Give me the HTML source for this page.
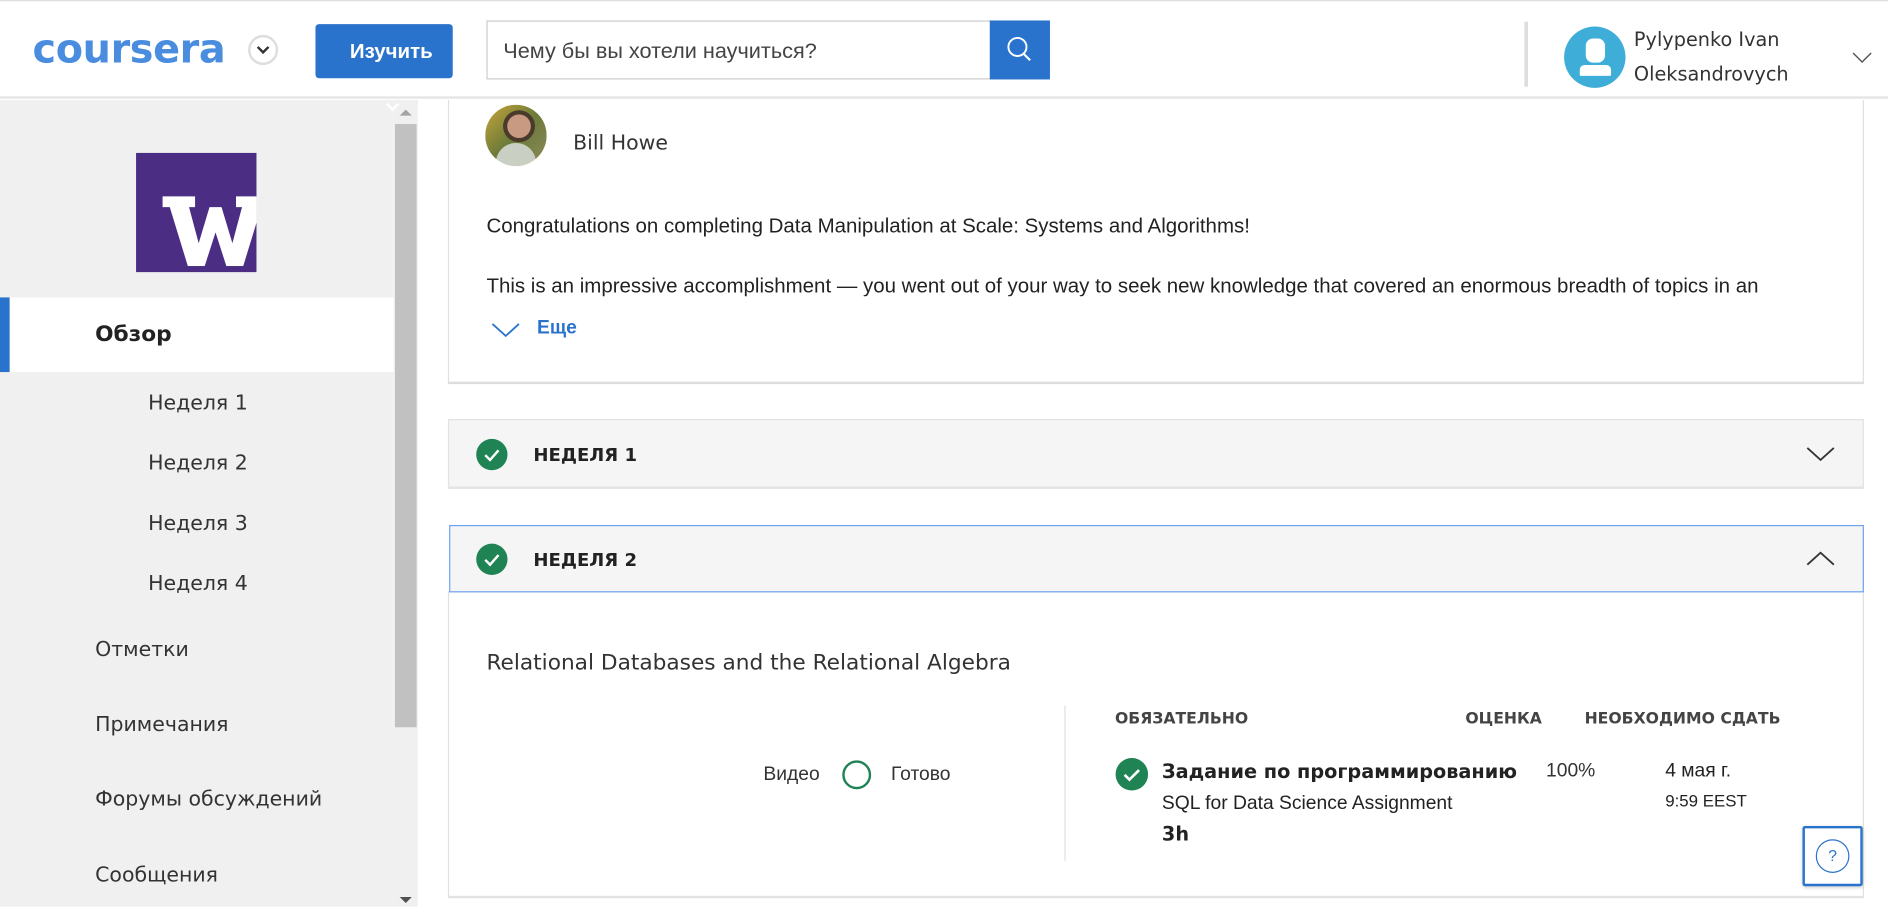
<!DOCTYPE html>
<html><head><meta charset="utf-8"><style>
*{margin:0;padding:0;box-sizing:border-box}
html,body{width:1888px;height:907px;overflow:hidden;background:#fff}
#w{position:absolute;left:0;top:0;width:1568px;height:753px;transform:scale(1.20408);transform-origin:0 0;font-family:"Liberation Sans","DejaVu Sans",sans-serif;color:#333}
.a{position:absolute;white-space:nowrap}
.os{font-family:"DejaVu Sans","Liberation Sans",sans-serif}
</style></head><body><div id="w">
<!-- header -->
<div class="a" style="left:0;top:0;width:1568px;height:82px;background:#fff;border-top:1px solid #ddd;border-bottom:2px solid #e5e5e5"></div>
<div class="a" style="left:27px;top:21px;font-size:33px;font-weight:bold;color:#4a8ddf;letter-spacing:-0.3px;font-family:'DejaVu Sans',sans-serif">coursera</div>
<div class="a" style="left:206px;top:29px;width:25px;height:25px;border:2px solid #ddd;border-radius:50%"></div>
<svg class="a" style="left:212px;top:36px" width="13" height="10"><path d="M2 3l4.5 4.5L11 3" stroke="#333" stroke-width="2" fill="none"/></svg>
<div class="a" style="left:262px;top:20px;width:114px;height:45px;background:#2a73cc;border-radius:3px;color:#fff;font-weight:bold;font-size:17px;line-height:45px;text-align:center;padding-left:12px">Изучить</div>
<div class="a" style="left:404px;top:17px;width:420px;height:49px;border:1px solid #ccc;font-size:18px;line-height:49px;padding-left:13px;color:#444">Чему бы вы хотели научиться?</div>
<div class="a" style="left:822px;top:17px;width:50px;height:49px;background:#2a73cc"></div>
<svg class="a" style="left:834px;top:29px" width="26" height="26"><circle cx="11" cy="10" r="7.5" stroke="#fff" stroke-width="1.6" fill="none"/><path d="M16 15.5l5.5 5.5" stroke="#fff" stroke-width="1.8"/></svg>
<div class="a" style="left:1266px;top:18px;width:3px;height:54px;background:#ddd"></div>
<div class="a" style="left:1299px;top:22px;width:51px;height:51px;border-radius:50%;background:#3eaed8;overflow:hidden">
 <div class="a" style="left:18px;top:10px;width:16px;height:20px;border-radius:6px;background:#fff"></div>
 <div class="a" style="left:13px;top:32px;width:26px;height:9px;border-radius:4px 4px 1px 1px;background:#fff"></div>
</div>
<div class="a os" style="left:1357px;top:18px;font-size:16px;line-height:29px;color:#333">Pylypenko Ivan<br>Oleksandrovych</div>
<svg class="a" style="left:1538px;top:42px" width="18" height="12"><path d="M1 2l7.5 7.5L16 2" stroke="#555" stroke-width="1.2" fill="none"/></svg>
<!-- sidebar -->
<div class="a" style="left:0;top:83px;width:327px;height:670px;background:#f0f0f0"></div>
<div class="a" style="left:327px;top:83px;width:20px;height:670px;background:#f0f0f0"></div>
<div class="a" style="left:328px;top:103px;width:18px;height:501px;background:#c1c1c1"></div>
<svg class="a" style="left:331px;top:88px" width="12" height="10"><path d="M1 8l5-5 5 5z" fill="#a3a3a3"/></svg>
<svg class="a" style="left:331px;top:743px" width="12" height="10"><path d="M1 2l5 5 5-5z" fill="#505050"/></svg>
<svg class="a" style="left:319px;top:84px" width="14" height="10"><path d="M2 2l5 5 5-5" stroke="#fff" stroke-width="2" fill="none"/></svg>
<div class="a" style="left:113px;top:127px;width:100px;height:99px;background:#4b2e83;overflow:hidden">
 <svg class="a" style="left:22px;top:36px" width="80" height="58"><path d="M0 0h27v9h-5l8 30 9-30h10l9 30 8-30h-5v-9h27v9h-6l-15 49h-14l-9-28-9 28h-14l-15-49h-6z" fill="#fff"/></svg>
</div>
<div class="a" style="left:0;top:247px;width:327px;height:62px;background:#fff"></div>
<div class="a" style="left:0;top:247px;width:8px;height:62px;background:#2a73cc"></div>
<div class="a os" style="left:79px;top:267px;font-size:18px;font-weight:bold;color:#222">Обзор</div>
<div class="a os" style="left:123px;top:325px;font-size:17px">Неделя 1</div>
<div class="a os" style="left:123px;top:375px;font-size:17px">Неделя 2</div>
<div class="a os" style="left:123px;top:425px;font-size:17px">Неделя 3</div>
<div class="a os" style="left:123px;top:475px;font-size:17px">Неделя 4</div>
<div class="a os" style="left:79px;top:530px;font-size:17px">Отметки</div>
<div class="a os" style="left:79px;top:592px;font-size:17px">Примечания</div>
<div class="a os" style="left:79px;top:654px;font-size:17px">Форумы обсуждений</div>
<div class="a os" style="left:79px;top:717px;font-size:17px">Сообщения</div>
<!-- main card -->
<div class="a" style="left:372px;top:83px;width:1176px;height:236px;border:1px solid #e0e0e0;border-top:none;border-bottom:2px solid #ddd"></div>
<div class="a" style="left:403px;top:87px;width:51px;height:51px;border-radius:50%;background:radial-gradient(circle at 55% 35%,#c99a82 0 22%,#4a3a2c 23% 30%,transparent 31%),radial-gradient(circle at 50% 95%,#c9cfc2 0 30%,transparent 31%),linear-gradient(135deg,#c9a63a,#6b7a3a 50%,#8d8a5a)"></div>
<div class="a os" style="left:476px;top:109px;font-size:17px;color:#333">Bill Howe</div>
<div class="a" style="left:404px;top:178px;font-size:17px;color:#222">Congratulations on completing Data Manipulation at Scale: Systems and Algorithms!</div>
<div class="a" style="left:404px;top:228px;width:1100px;height:18px;overflow:hidden;font-size:17px;color:#222">This is an impressive accomplishment — you went out of your way to seek new knowledge that covered an enormous breadth of topics in an</div>
<svg class="a" style="left:408px;top:267px" width="24" height="14"><path d="M1 2l11 10L23 2" stroke="#2a73cc" stroke-width="1.5" fill="none"/></svg>
<div class="a" style="left:446px;top:264px;font-size:16px;font-weight:bold;color:#2a73cc">Еще</div>
<!-- week 1 -->
<div class="a" style="left:372px;top:348px;width:1176px;height:58px;background:#f5f5f5;border:1px solid #e3e3e3;border-bottom-width:2px"></div>
<svg class="a" style="left:395px;top:364px" width="27" height="27"><circle cx="13.5" cy="13.5" r="13" fill="#1f8354"/><path d="M8 14l4 4 7-8" stroke="#fff" stroke-width="2" fill="none"/></svg>
<div class="a os" style="left:443px;top:369px;font-size:15px;font-weight:bold;color:#222">НЕДЕЛЯ 1</div>
<svg class="a" style="left:1500px;top:370px" width="24" height="14"><path d="M1 2l11 10L23 2" stroke="#333" stroke-width="1.5" fill="none"/></svg>
<!-- week 2 -->
<div class="a" style="left:372px;top:491px;width:1176px;height:255px;border:1px solid #e0e0e0;border-bottom:2px solid #e3e3e3"></div>
<div class="a" style="left:373px;top:436px;width:1175px;height:56px;background:#f5f5f5;border:1px solid #6ea1f0"></div>
<svg class="a" style="left:395px;top:451px" width="27" height="27"><circle cx="13.5" cy="13.5" r="13" fill="#1f8354"/><path d="M8 14l4 4 7-8" stroke="#fff" stroke-width="2" fill="none"/></svg>
<div class="a os" style="left:443px;top:456px;font-size:15px;font-weight:bold;color:#222">НЕДЕЛЯ 2</div>
<svg class="a" style="left:1500px;top:457px" width="24" height="14"><path d="M1 12L12 2l11 10" stroke="#333" stroke-width="1.5" fill="none"/></svg>
<div class="a os" style="left:404px;top:540px;font-size:18px;color:#333">Relational Databases and the Relational Algebra</div>
<div class="a" style="left:884px;top:586px;width:1px;height:129px;background:#e0e0e0"></div>
<div class="a" style="left:634px;top:635px;font-size:16px;color:#333">Видео</div>
<svg class="a" style="left:699px;top:631px" width="25" height="25"><circle cx="12.5" cy="12.5" r="11" stroke="#1f8354" stroke-width="2" fill="none"/></svg>
<div class="a" style="left:740px;top:635px;font-size:16px;color:#333">Готово</div>
<div class="a os" style="left:926px;top:590px;font-size:13px;font-weight:bold;color:#444">ОБЯЗАТЕЛЬНО</div>
<div class="a os" style="left:1217px;top:590px;font-size:13px;font-weight:bold;color:#444">ОЦЕНКА</div>
<div class="a os" style="left:1316px;top:590px;font-size:13px;font-weight:bold;color:#444">НЕОБХОДИМО СДАТЬ</div>
<svg class="a" style="left:926px;top:629px" width="28" height="28"><circle cx="14" cy="14" r="13.5" fill="#1f8354"/><path d="M8 14.5l4 4 8-8" stroke="#fff" stroke-width="2.2" fill="none"/></svg>
<div class="a os" style="left:965px;top:631px;font-size:16px;font-weight:bold;color:#222">Задание по программированию</div>
<div class="a" style="left:965px;top:659px;font-size:16px;color:#222">SQL for Data Science Assignment</div>
<div class="a os" style="left:965px;top:683px;font-size:16px;font-weight:bold;color:#222">3h</div>
<div class="a" style="left:1284px;top:632px;font-size:16px;color:#333">100%</div>
<div class="a" style="left:1383px;top:632px;font-size:16px;color:#222">4 мая г.</div>
<div class="a" style="left:1383px;top:657px;font-size:14px;color:#222">9:59 EEST</div>
<div class="a" style="left:1497px;top:686px;width:50px;height:50px;background:#fff;border:2px solid #2a73cc;border-radius:2px;box-shadow:0 1px 3px rgba(0,0,0,.2)"></div>
<div class="a" style="left:1508px;top:697px;width:28px;height:28px;border:1.5px solid #2a73cc;border-radius:50%;text-align:center;font-size:13px;line-height:25px;color:#2a73cc">?</div>
</div></body></html>
